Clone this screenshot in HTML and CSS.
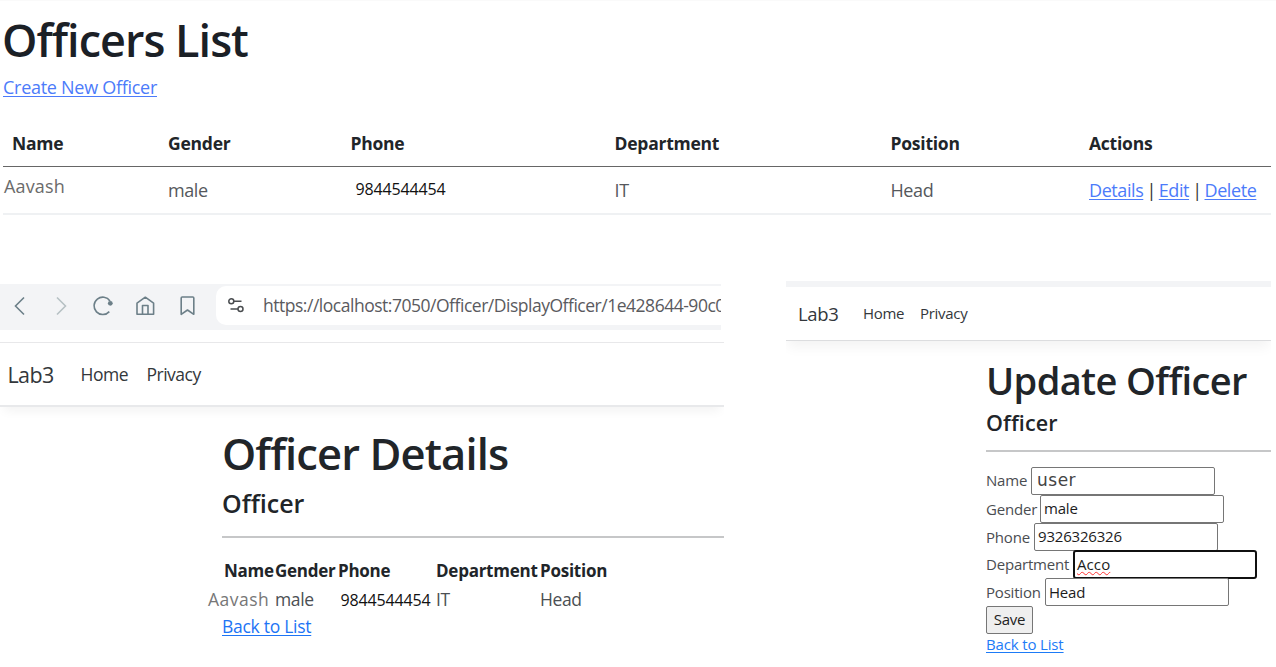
FILE: index.html
```html
<!DOCTYPE html>
<html lang="en">
<head>
<meta charset="utf-8">
<title>Officers List</title>
<link rel="stylesheet" href="styles.css">
</head>
<body>
<section class="officers">
  <h1 class="officers-title"><span>Officers List</span></h1>
  <a class="create" href="#">Create New Officer</a>
  <div class="grid head">
    <span>Name</span><span>Gender</span><span>Phone</span><span>Department</span><span>Position</span><span>Actions</span>
  </div>
  <div class="grid row">
    <span class="name">Aavash</span><span>male</span><span class="phone">9844544454</span><span>IT</span><span>Head</span>
    <span class="actions"><a href="#">Details</a><i>|</i><a href="#">Edit</a><i>|</i><a href="#">Delete</a></span>
  </div>
</section>
<div class="panels">
  <section class="details">
    <div class="toolbar">
      <svg class="icons" width="216" height="46" viewBox="0 0 216 46" fill="none" stroke="#6c7f88" stroke-width="1.6">
        <path d="M24 13.500l-8.500 8.500L24 30.500"/>
        <path d="M57 13.500l8.500 8.500L57 30.500" stroke="#b7c0c4"/>
        <path d="M110 17A8.700 8.700 0 1 0 109.300 27.600"/>
        <circle cx="110.300" cy="19.300" r="2.400" fill="#6c7f88" stroke="none"/>
        <path d="M137 19.200l8.300-6 8.300 6V30.300H137zM142.500 30V21.500h5.500V30" stroke-linejoin="round"/>
        <path d="M181.200 14q0-1 1-1h10.600q1 0 1 1V30.300l-6.300-4.300-6.300 4.300z" stroke-linejoin="round"/>
      </svg>
      <div class="address">
        <svg width="16" height="16" viewBox="0 0 16 16" fill="none" stroke="#4a4d50" stroke-width="1.500">
          <circle cx="3.300" cy="4.200" r="2.500"/><path d="M6 4.200h7.500M2.500 12H10"/><circle cx="12.500" cy="12" r="2.500"/>
        </svg>
        <span>https://localhost:7050/Officer/DisplayOfficer/1e428644-90c0</span>
      </div>
    </div>
    <nav class="nav"><b>Lab3</b><span class="home">Home</span><span class="privacy">Privacy</span></nav>
    <div class="body">
      <h1><span>Officer Details</span></h1>
      <h2><span>Officer</span></h2>
      <hr>
      <div class="mini mini-head"><span>Name</span><span>Gender</span><span>Phone</span><span>Department</span><span>Position</span></div>
      <div class="mini"><span class="name">Aavash</span><span>male</span><span class="phone">9844544454</span><span>IT</span><span>Head</span></div>
      <a class="back" href="#">Back to List</a>
    </div>
  </section>
  <section class="update">
    <nav class="nav"><b>Lab3</b><span class="home">Home</span><span class="privacy">Privacy</span></nav>
    <div class="body">
      <h1><span>Update Officer</span></h1>
      <h2><span>Officer</span></h2>
      <hr>
      <div class="field f-name"><label>Name</label><div class="input user">user</div></div>
      <div class="field f-gender"><label>Gender</label><div class="input">male</div></div>
      <div class="field f-phone"><label>Phone</label><div class="input">9326326326</div></div>
      <div class="field f-dept"><label>Department</label><div class="input focus"><span>Acco</span></div></div>
      <div class="field f-pos"><label>Position</label><div class="input">Head</div></div>
      <button class="save">Save</button>
      <a class="back" href="#">Back to List</a>
    </div>
  </section>
</div>
</body>
</html>
```
FILE: styles.css
```css
* { box-sizing: border-box; }
body { margin: 0; width: 1276px; height: 667px; overflow: hidden; background: #fff; color: #212529; font-family: "Open Sans", "Noto Sans", sans-serif; white-space: nowrap; }
h1, h2 { margin: 0; font-weight: 600; }
a { color: #4c7bfa; text-decoration: underline; text-underline-offset: 2px; text-decoration-thickness: 1px; }
.officers { height: 281px; padding: 10px 5px 0 3px; font-size: 18px; letter-spacing: -0.4px; border-top: 1px solid #fafafa; }
.officers-title { height: 57px; line-height: 57px; margin-left: -1px; font-size: 45px; letter-spacing: -0.97px; color: #1b2026; }
.create { display: block; height: 38px; line-height: 38px; letter-spacing: -0.28px; }
.grid { display: grid; grid-template-columns: 156px 182.500px 264px 276px 198.500px 1fr; padding-left: 9px; width: 1268px; }
.head { height: 61px; line-height: 74px; font-weight: 700; font-size: 17.5px; letter-spacing: -0.24px; border-bottom: 1px solid #666; }
.row { height: 48px; line-height: 46px; color: #55585c; border-bottom: 2px solid #eff1f3; }
.row .name { margin-left: -8px; line-height: 39px; color: #6b6b6b; letter-spacing: 0.15px; }
.row .phone { padding-left: 5px; line-height: 44px; color: #111; font-size: 16px; letter-spacing: -0.15px; }
.actions i { font-style: normal; margin: 0 2.800px 0 3.200px; color: #333; }
.actions { letter-spacing: -0.42px; }
.panels { display: flex; gap: 62px; }
.details { width: 724px; padding-top: 3px; }
.toolbar { width: 721px; height: 46px; display: flex; background: #f3f4f6; overflow: hidden; }
.icons { flex: none; }
.address { flex: none; width: 520px; height: 39px; margin-top: 2px; padding: 0 0 1px 12px; display: flex; align-items: center; gap: 19px; background: #fff; border-radius: 10px; font-size: 17.5px; letter-spacing: -0.48px; color: #5a5a5e; }
.nav { display: flex; align-items: center; color: #33373b; }
.nav b { font-weight: 400; }
.details .nav { height: 65px; margin-top: 12px; padding-left: 7.500px; border-top: 1px solid #e8e8ea; border-bottom: 2px solid #e8e9eb; box-shadow: 0 8px 10px -4px #0000000d; clip-path: inset(0 0 -20px 0); font-size: 17.5px; letter-spacing: -0.5px; }
.details .nav b { width: 73px; font-size: 21.5px; letter-spacing: -0.6px; }
.details .home { width: 66px; }
.details .body { padding: 18px 0 0 222px; font-size: 17.5px; letter-spacing: -0.4px; }
.details h1 { height: 58px; line-height: 58px; font-size: 43.5px; letter-spacing: -0.88px; }
.details h2 { height: 42px; line-height: 41px; font-size: 25px; letter-spacing: 0; }
hr { margin: 0; border: 0; background: #c6c7c8; height: 2px; }
.details hr { margin: 11px 0 18px; }
.mini { display: grid; grid-template-columns: 51px 63px 98px 104px 1fr; padding-left: 2px; height: 28px; line-height: 29px; color: #4b4f53; }
.mini-head { height: 29px; font-weight: 700; font-size: 17px; letter-spacing: -0.25px; color: #212529; }
.mini .name { margin-left: -16px; color: #777; letter-spacing: 0.5px; }
.mini .phone { padding-left: 2.500px; line-height: 30px; color: #111; font-size: 16px; letter-spacing: -0.15px; }
.details .back { display: block; line-height: 27px; letter-spacing: -0.28px; color: #1d74f5; }
.update { width: 485px; border-top: 6px solid #f3f4f6; }
.update .nav { height: 54px; padding: 0 0 1px 12px; border-bottom: 1px solid #dcdddf; box-shadow: 0 8px 12px -2px #0000000d; clip-path: inset(0 0 -20px 0); font-size: 15px; letter-spacing: -0.3px; }
.update .nav b { width: 65px; font-size: 18.5px; }
.update .home { width: 57px; }
.update .body { padding: 15px 0 0 200px; font-size: 15px; letter-spacing: -0.2px; color: #4a4d51; }
.update h1 { height: 48px; line-height: 48px; font-size: 38px; letter-spacing: -0.62px; color: #212529; }
.update h2 { height: 36px; line-height: 38px; font-size: 21.5px; letter-spacing: 0.1px; color: #212529; }
.update hr { margin: 10px 0 15px; }
.field { display: flex; height: 27.800px; line-height: 28px; }
.f-name label { width: 45px; }
.f-gender label { width: 54px; }
.f-phone label { width: 48px; }
.f-dept label { width: 87px; }
.f-pos label { width: 59px; }
.input { width: 184px; height: 28px; line-height: 26px; padding-left: 3px; border: 1px solid #767676; border-radius: 2px; color: #1c1c1c; background: #fff; }
.f-name { line-height: 27px; }
.f-gender .input, .f-phone .input { line-height: 25px; }
.input.user { padding-left: 5px; font: 17px/25px "DejaVu Sans", sans-serif; letter-spacing: 0.5px; color: #444; }
.input.focus { height: 29px; border: 2px solid #101010; border-radius: 3px; line-height: 24px; padding-left: 2px; letter-spacing: 0.1px; }
.focus span { text-decoration: underline wavy #f33 1px; text-underline-offset: 1px; text-decoration-skip-ink: none; }
.save { display: block; width: 47px; height: 28px; padding: 0 0 1px; border: 1px solid #767676; border-radius: 2px; background: #efefef; color: #222; font: 15px "Open Sans", sans-serif; letter-spacing: -0.3px; }
.update .back { display: block; line-height: 21px; letter-spacing: -0.15px; color: #1d7bf7; }
```
